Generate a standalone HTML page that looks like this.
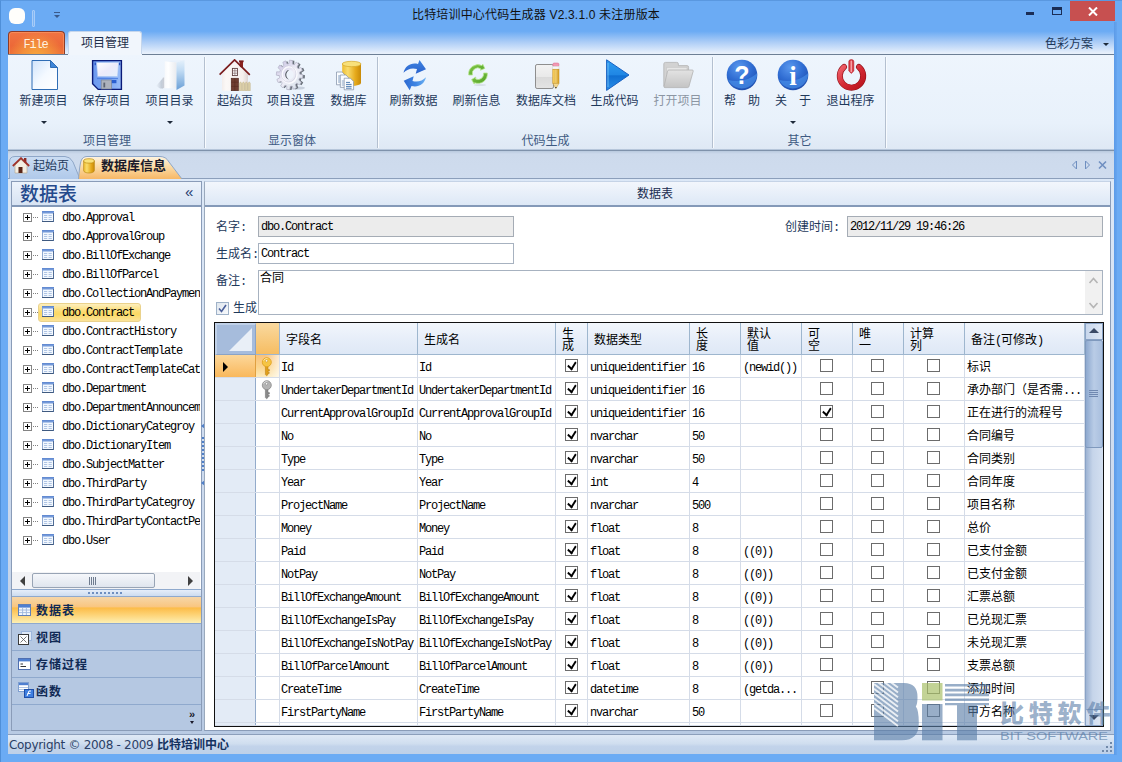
<!DOCTYPE html><html lang="zh"><head><meta charset="utf-8"><title>比特培训中心代码生成器</title><style>
*{box-sizing:border-box;margin:0;padding:0}
html,body{width:1122px;height:762px;overflow:hidden}
body{position:relative;background:#6babf4;font-family:"Liberation Sans","Noto Sans CJK SC",sans-serif;font-size:12px;color:#000}
.a{position:absolute}
.ui{font-family:"Liberation Sans","Noto Sans CJK SC",sans-serif;color:#1e395b}
.ss{font-family:"Liberation Mono","Noto Sans CJK SC",monospace;font-size:12px;letter-spacing:-1.2px;white-space:nowrap}
.ss b,.cj{letter-spacing:0;font-weight:normal;font-family:"Liberation Sans","Noto Sans CJK SC",sans-serif}
.rb{position:absolute;top:59px;height:74px;text-align:center;white-space:nowrap}
.rb svg{position:absolute;top:0;left:50%;margin-left:-16px}
.rb span{position:absolute;left:0;right:0;top:34px;line-height:16px;font-size:12px;color:#1e395b}
.rb i{position:absolute;left:50%;margin-left:-3px;top:62px;width:0;height:0;border:3px solid transparent;border-top:3px solid #1e2a3a;border-bottom:0}
.gl{position:absolute;top:133px;height:16px;line-height:16px;text-align:center;color:#3e5a82;font-size:12px}
.sep{position:absolute;top:57px;height:91px;width:2px;border-left:1px solid #b4c0d0;border-right:1px solid #f8fbfe}
.tr{position:absolute;left:12px;width:188px;height:19px;overflow:hidden}
.tr .pm{position:absolute;left:11px;top:5px;width:9px;height:9px;border:1px solid #848484;background:#fff}
.tr .pm:before{content:"";position:absolute;left:1px;top:3px;width:5px;height:1px;background:#000}
.tr .pm:after{content:"";position:absolute;left:3px;top:1px;width:1px;height:5px;background:#000}
.tr .dt{position:absolute;left:21px;top:9px;width:5px;height:1px;background-image:linear-gradient(90deg,#808080 1px,transparent 1px);background-size:2px 1px}
.tr svg{position:absolute;left:30px;top:3px}
.tr .tx{position:absolute;left:50px;top:2px;line-height:17px;height:19px}
.nb{position:absolute;left:12px;width:189px;height:27px;border-top:1px solid #8fa9cd;background:#b5c8e2}
.nb span{position:absolute;left:24px;top:2px;letter-spacing:1px;line-height:25px;font-weight:bold;color:#102a55;font-size:12px;font-family:"Liberation Sans","Noto Sans CJK SC",sans-serif}
.nb svg{position:absolute;left:6px;top:6px}
.lab{position:absolute;margin-top:1px;line-height:14px;color:#1e395b;font-size:12px;white-space:nowrap;font-family:"Liberation Sans","Noto Sans CJK SC",sans-serif}
.inp{position:absolute;height:21px;border:1px solid #a7b2c0;background:#fff;padding-left:2px;line-height:21px;overflow:hidden}
.inp.dis{background:#ececec;border-color:#a5acb5}
.gh{position:absolute;top:323px;height:32px;background:linear-gradient(#f2f6fc 0,#e7eef9 50%,#dee8f6 100%);border-right:1px solid #9eb6ce;border-bottom:1px solid #9eb6ce;color:#000;font-family:"Liberation Sans","Noto Sans CJK SC",sans-serif;font-size:12px;line-height:12px;white-space:nowrap;overflow:hidden}
.gh span{position:absolute;left:6px}
.gr{position:absolute;left:215px;width:870px;height:23px;border-bottom:1px solid #d5dce8;background:#fff}
.gr .rh{position:absolute;left:0;top:0;width:41px;height:23px;background:#e3ebf6;border-right:1px solid #93abcb;border-bottom:1px solid #93abcb}
.gr .c{position:absolute;top:0;height:22px;border-right:1px solid #d5dce8;line-height:27px;overflow:hidden;padding-left:1px}
.cb{position:absolute;top:4px;width:13px;height:13px;border:1px solid #6c6c6c;background:#fff}
.cb.on:after{content:"";position:absolute;left:3px;top:0px;width:3.5px;height:7px;border:solid #000;border-width:0 2.2px 2.2px 0;transform:rotate(42deg) skewX(10deg)}
</style></head><body>
<div class="a" style="left:0;top:0;width:1122px;height:762px;background:#6babf4;border-left:1px solid #4f8fd8;border-top:1px solid #5a98e0"></div>
<div class="a" style="left:1114px;top:22px;width:3px;height:733px;background:linear-gradient(90deg,#5c9be8,#66a5ef)"></div>
<div class="a" style="left:8px;top:28px;width:1106px;height:27px;background:linear-gradient(#6babf4 0,#6babf4 12%,#a9cbf6 50%,#e6effb 92%,#eaf1fb 100%)"></div>
<div class="a" style="left:9px;top:8px;width:16px;height:16px;border-radius:6px;background:#fffefb"></div>
<div class="a" style="left:32px;top:10px;width:3px;height:17px;border:1px solid #a8ccf8;border-radius:1px;background:#7fb6f5"></div>
<div class="a" style="left:54px;top:12px;width:6px;height:1px;background:#3a5a8a"></div>
<div class="a" style="left:54px;top:15px;width:0;height:0;border:3px solid transparent;border-top:3px solid #3a5a8a;border-bottom:0"></div>
<div class="a ui" style="left:0;top:6px;width:1072px;text-align:center;font-size:12px;line-height:18px;color:#111;white-space:nowrap;letter-spacing:.18px">比特培训中心代码生成器 V2.3.1.0 未注册版本</div>
<div class="a" style="left:1026px;top:12px;width:8px;height:3px;background:#1a2d55"></div>
<div class="a" style="left:1052px;top:7px;width:10px;height:8px;border:1px solid #1a2d55;border-top-width:3px"></div>
<div class="a" style="left:1070px;top:1px;width:45px;height:20px;background:#c75050"></div>
<svg class="a" style="left:1088px;top:7px" width="10" height="9" viewBox="0 0 10 9"><path d="M1 0.5 L9 8.5 M9 0.5 L1 8.5" stroke="#fff" stroke-width="2"/></svg>
<div class="a" style="left:8px;top:31px;width:57px;height:24px;border:1px solid #8c3b28;border-bottom:0;border-radius:4px 4px 0 0;background:radial-gradient(ellipse at 50% 105%,#f7a63c 0,rgba(247,166,60,.6) 35%,rgba(247,166,60,0) 70%),linear-gradient(#f07442 0,#ec6838 60%,#ee7038 100%);box-shadow:inset 0 0 0 1px rgba(255,170,120,.45)"></div>
<div class="a ss" style="left:7px;top:37px;width:57px;text-align:center;color:#fff3e0;line-height:16px">File</div>
<div class="a" style="left:68px;top:31px;width:74px;height:24px;border:1px solid #c5d6ec;border-bottom:0;border-radius:3px 3px 0 0;background:#f1f6fc"></div>
<div class="a ui" style="left:68px;top:34px;width:74px;text-align:center;line-height:18px;font-size:12px;color:#1e2f4a">项目管理</div>
<div class="a ui" style="left:1045px;top:35px;line-height:18px;font-size:12px;color:#1e395b;white-space:nowrap">色彩方案</div>
<div class="a" style="left:1103px;top:43px;width:0;height:0;border:3px solid transparent;border-top:3px solid #1e2a3a;border-bottom:0"></div>
<div class="a" style="left:8px;top:54px;width:1106px;height:97px;border-top:1px solid #6d7f95;border-bottom:1px solid #7f92ab;background:linear-gradient(#eef5fd 0,#e8f1fb 72%,#dee8f4 100%)"></div>
<div class="a" style="left:68px;top:54px;width:74px;height:1px;background:#f1f6fc"></div>
<div class="a" style="left:8px;top:149px;width:1106px;height:1px;background:#b6c6da"></div>
<svg width="0" height="0" style="position:absolute"><defs>
<linearGradient id="gDoc" x1="0" y1="0" x2="1" y2="1"><stop offset="0" stop-color="#cfe3fb"/><stop offset=".5" stop-color="#f4f9ff"/><stop offset="1" stop-color="#ffffff"/></linearGradient>
<linearGradient id="gFl" x1="0" y1="0" x2="1" y2="0"><stop offset="0" stop-color="#6b98ee"/><stop offset=".6" stop-color="#7ea8f4"/><stop offset="1" stop-color="#98bcf8"/></linearGradient>
<linearGradient id="gFlL" x1="0" y1="0" x2="1" y2="1"><stop offset="0" stop-color="#ffffff"/><stop offset=".5" stop-color="#ecebfa"/><stop offset="1" stop-color="#e4f0fd"/></linearGradient>
<linearGradient id="gFo" x1="0" y1="0" x2="0" y2="1"><stop offset="0" stop-color="#e6f1fb"/><stop offset=".35" stop-color="#c2dcf4"/><stop offset="1" stop-color="#6a9fd6"/></linearGradient>
<linearGradient id="gFoW" x1="0" y1="0" x2="1" y2="0"><stop offset="0" stop-color="#f4f6f9"/><stop offset=".4" stop-color="#ffffff"/><stop offset="1" stop-color="#e9ebef"/></linearGradient>
<linearGradient id="gWall" x1="0" y1="0" x2="1" y2="0"><stop offset="0" stop-color="#f3eeec"/><stop offset=".15" stop-color="#fbf8f6"/><stop offset=".8" stop-color="#f6f0ee"/><stop offset="1" stop-color="#ddd4d2"/></linearGradient>
<linearGradient id="gGear" x1="0" y1="0" x2="1" y2="1"><stop offset="0" stop-color="#c4bfe0"/><stop offset=".5" stop-color="#efeef7"/><stop offset="1" stop-color="#d3dfe6"/></linearGradient>
<linearGradient id="gCyl" x1="0" y1="0" x2="1" y2="0"><stop offset="0" stop-color="#eebc30"/><stop offset=".3" stop-color="#f9dc6c"/><stop offset=".7" stop-color="#e6aa1c"/><stop offset="1" stop-color="#c88a08"/></linearGradient>
<linearGradient id="gBl" x1="0" y1="0" x2="0" y2="1"><stop offset="0" stop-color="#3f84e2"/><stop offset="1" stop-color="#2a62cc"/></linearGradient>
<linearGradient id="gGr" x1="0" y1="0" x2="1" y2="1"><stop offset="0" stop-color="#86cc4c"/><stop offset="1" stop-color="#4c9c22"/></linearGradient>
<linearGradient id="gNote" x1="0" y1="0" x2="0" y2="1"><stop offset="0" stop-color="#f3f3f3"/><stop offset=".5" stop-color="#e9e9e9"/><stop offset=".52" stop-color="#dadada"/><stop offset="1" stop-color="#e4e4e4"/></linearGradient>
<linearGradient id="gPen" x1="0" y1="0" x2="1" y2="0"><stop offset="0" stop-color="#f6c44a"/><stop offset=".5" stop-color="#fbe08a"/><stop offset="1" stop-color="#d79a1c"/></linearGradient>
<linearGradient id="gPlay" x1="0" y1="0" x2="0" y2="1"><stop offset="0" stop-color="#2f9df0"/><stop offset=".5" stop-color="#1f86e4"/><stop offset=".52" stop-color="#0f6fd2"/><stop offset="1" stop-color="#2a8fe8"/></linearGradient>
<linearGradient id="gGf" x1="0" y1="0" x2="0" y2="1"><stop offset="0" stop-color="#e3e3e3"/><stop offset="1" stop-color="#c4c4c4"/></linearGradient>
<radialGradient id="gBall" cx=".4" cy=".25" r=".85"><stop offset="0" stop-color="#5a98ee"/><stop offset=".5" stop-color="#2f6cd2"/><stop offset="1" stop-color="#1c48a6"/></radialGradient>
<linearGradient id="gRed" x1="0" y1="0" x2="0" y2="1"><stop offset="0" stop-color="#e8454a"/><stop offset="1" stop-color="#a80f16"/></linearGradient>
<linearGradient id="gTi2" x1="0" y1="0" x2="0" y2="1"><stop offset="0" stop-color="#5a84cf"/><stop offset="1" stop-color="#86a8e0"/></linearGradient><linearGradient id="gTi" x1="0" y1="0" x2="0" y2="1"><stop offset="0" stop-color="#5f8fd8"/><stop offset=".3" stop-color="#5f8fd8"/><stop offset=".31" stop-color="#f4f8fd"/><stop offset="1" stop-color="#dbe6f4"/></linearGradient>
</defs></svg>
<div class="rb" style="left:12.5px;width:62px"><svg width="32" height="32" viewBox="0 0 32 32"><path d="M4 1.5 H22.5 L29.5 8.5 V30.5 H4 Z" fill="url(#gDoc)" stroke="#2f6db5" stroke-width="1"/><path d="M22.5 1.5 V8.5 H29.5 Z" fill="#3f86d8" stroke="#2f6db5" stroke-width="1" stroke-linejoin="round"/></svg><span style="color:#1e395b">新建项目</span><i></i></div>
<div class="rb" style="left:75.5px;width:62px"><svg width="32" height="32" viewBox="0 0 32 32"><path d="M1.6 1.6 H30.4 V30.4 H7.2 L1.6 24.8 Z" fill="url(#gFl)" stroke="#0a1a78" stroke-width="1.4" stroke-linejoin="miter"/><path d="M5.6 3.4 H27.6 L26.6 17.6 H6.6 Z" fill="url(#gFlL)" stroke="#a8c4f0" stroke-width=".6"/><rect x="3.6" y="3.6" width="1.3" height="2.6" fill="#2a50c0"/><rect x="28" y="3.6" width="1.3" height="2.6" fill="#2a50c0"/><path d="M6 19.6 H27" stroke="#4f80e0" stroke-width="1"/><rect x="10.2" y="21" width="10.4" height="9" fill="#aeb2bc" stroke="#7f8694" stroke-width=".7"/><rect x="12.4" y="23.6" width="1.8" height="4.8" fill="#5e6572"/><rect x="20.8" y="21" width="4.6" height="3.2" fill="#2a5fd0"/></svg><span style="color:#1e395b">保存项目</span></div>
<div class="rb" style="left:138.5px;width:62px"><svg width="32" height="32" viewBox="0 0 32 32"><defs><linearGradient id="gSh" x1="0" y1="0" x2="1" y2="0"><stop offset="0" stop-color="#9aa4b4" stop-opacity="0"/><stop offset="1" stop-color="#8e98a8" stop-opacity=".55"/></linearGradient></defs><path d="M2 27 L9 19 V29.4 L6 29.4Z" fill="url(#gSh)"/><path d="M10.7 2.2 L30.5 .7 L22.5 3.6Z" fill="#e8f1fb"/><path d="M10.7 2.2 L22.5 3.6 V29.2 L9.6 29.2 L8.8 28.4 V18.5 H10.7Z" fill="url(#gFoW)"/><path d="M8.8 18.5 V28.4 L9.6 29.2 L10.2 29.2 V18.5Z" fill="#c9cdd6"/><path d="M22.5 3.6 L30.5 .7 V26.5 L22.5 31Z" fill="url(#gFo)"/></svg><span style="color:#1e395b">项目目录</span><i></i></div>
<div class="rb" style="left:210px;width:50px"><svg width="32" height="32" viewBox="0 0 32 32"><rect x="20.6" y="2.4" width="3.4" height="6" fill="#8a2420"/><rect x="20" y="1.4" width="4.6" height="1.8" fill="#7a1c1c"/><path d="M3 15 L15.6 2.6 L29 15.4 V31.7 H3 Z" fill="url(#gWall)"/><path d="M.6 15.6 L15.6 .9 L30.8 15.8" fill="none" stroke="#7c1d1d" stroke-width="1.7" stroke-linejoin="miter"/><rect x="13.4" y="9.4" width="5" height="7.2" fill="#fff" stroke="#5e4040" stroke-width=".9"/><path d="M15.9 9.4 V16.6 M13.4 11.8 H18.4 M13.4 14.2 H18.4" stroke="#6e5050" stroke-width=".6"/><rect x="11.4" y="18.4" width="8.8" height="13.3" fill="#fff"/><rect x="12.2" y="19.2" width="7.3" height="12.5" fill="#6e3c30" stroke="#4a2218" stroke-width=".6"/><path d="M12.2 23.2H19.5M12.2 27.4H19.5M15.8 19.2V31.7" stroke="#55281e" stroke-width=".5"/><path d="M20.4 24.2 l1.1-1.4 l1.1 1.4 v7.5 h-2.2z M23.3 24.2 l1.1-1.4 l1.1 1.4 v7.5 h-2.2z M26.2 24.2 l1.1-1.4 l1.1 1.4 v7.5 h-2.2z M29.1 24.2 l1.1-1.4 l1.1 1.4 v7.5 h-2.2z" fill="#dccfa8" stroke="#b9a878" stroke-width=".4"/></svg><span style="color:#1e395b">起始页</span></div>
<div class="rb" style="left:260px;width:62px"><svg width="32" height="32" viewBox="0 0 32 32"><ellipse cx="22" cy="29" rx="8" ry="1.6" fill="#aab2c2" opacity=".55"/><g transform="translate(16.4 16.3) scale(.92 1) rotate(6)"><path d="M14.7 -1.7 L14.7 1.7 L11.2 1.9 L10.7 4.0 L13.6 5.9 L11.9 8.8 L8.8 7.3 L7.3 8.8 L8.8 11.9 L5.9 13.6 L4.0 10.7 L1.9 11.2 L1.7 14.7 L-1.7 14.7 L-1.9 11.2 L-4.0 10.7 L-5.9 13.6 L-8.8 11.9 L-7.3 8.8 L-8.8 7.3 L-11.9 8.8 L-13.6 5.9 L-10.7 4.0 L-11.2 1.9 L-14.7 1.7 L-14.7 -1.7 L-11.2 -1.9 L-10.7 -4.0 L-13.6 -5.9 L-11.9 -8.8 L-8.8 -7.3 L-7.3 -8.8 L-8.8 -11.9 L-5.9 -13.6 L-4.0 -10.7 L-1.9 -11.2 L-1.7 -14.7 L1.7 -14.7 L1.9 -11.2 L4.0 -10.7 L5.9 -13.6 L8.8 -11.9 L7.3 -8.8 L8.8 -7.3 L11.9 -8.8 L13.6 -5.9 L10.7 -4.0 L11.2 -1.9 Z M-0.0 0.0 a0.0 0.0 0 1 0 0.0 0 a0.0 0.0 0 1 0 -0.0 0 Z" fill="#6a717a"/></g><g transform="translate(14.6 16) scale(.9 1) rotate(6)"><path d="M14.7 -1.7 L14.7 1.7 L11.2 1.9 L10.7 4.0 L13.6 5.9 L11.9 8.8 L8.8 7.3 L7.3 8.8 L8.8 11.9 L5.9 13.6 L4.0 10.7 L1.9 11.2 L1.7 14.7 L-1.7 14.7 L-1.9 11.2 L-4.0 10.7 L-5.9 13.6 L-8.8 11.9 L-7.3 8.8 L-8.8 7.3 L-11.9 8.8 L-13.6 5.9 L-10.7 4.0 L-11.2 1.9 L-14.7 1.7 L-14.7 -1.7 L-11.2 -1.9 L-10.7 -4.0 L-13.6 -5.9 L-11.9 -8.8 L-8.8 -7.3 L-7.3 -8.8 L-8.8 -11.9 L-5.9 -13.6 L-4.0 -10.7 L-1.9 -11.2 L-1.7 -14.7 L1.7 -14.7 L1.9 -11.2 L4.0 -10.7 L5.9 -13.6 L8.8 -11.9 L7.3 -8.8 L8.8 -7.3 L11.9 -8.8 L13.6 -5.9 L10.7 -4.0 L11.2 -1.9 Z M-0.0 0.0 a0.0 0.0 0 1 0 0.0 0 a0.0 0.0 0 1 0 -0.0 0 Z" fill="url(#gGear)" stroke="#b3b1c6" stroke-width=".7"/></g><ellipse cx="14.4" cy="15.8" rx="7.4" ry="8.2" fill="none" stroke="#fcfcff" stroke-width="1.8" opacity=".9"/><ellipse cx="14.4" cy="15.8" rx="7.4" ry="8.2" fill="none" stroke="#c4c2d6" stroke-width=".5" transform="translate(-.9 -.9)"/><ellipse cx="14.6" cy="15.8" rx="4" ry="4.7" fill="#eef3fb"/><path d="M14.2 11.1 A4 4.7 0 0 0 14.2 20.5 A6.4 5.6 0 0 1 14.2 11.1Z" fill="#4e545c"/></svg><span style="color:#1e395b">项目设置</span></div>
<div class="rb" style="left:323.5px;width:50px"><svg width="32" height="32" viewBox="0 0 32 32"><path d="M9.2 5 V24 A9.4 3 0 0 0 28 24 V5 Z" fill="url(#gCyl)"/><ellipse cx="18.6" cy="5" rx="9.4" ry="2.7" fill="#f8e07a" stroke="#d4a62a" stroke-width=".7"/><g stroke="#7c8ca3" stroke-width=".7" fill="#fbfdff"><path d="M3.5 13 h5.6 l2.4 2.4 v10.4 h-8z"/><path d="M7.3 16 h5.6 l2.6 2.6 v9.8 h-8.2z"/><path d="M11.2 19.2 h6.2 l3.2 3.2 v8.4 h-9.4z"/></g><path d="M13 23.4h4M13 25.4h5.6M13 27.4h5.6M13 29.2h5.6" stroke="#3f6fa8" stroke-width=".9"/><path d="M5 17h2M5 19h2M5 21h2M5 23h2M8.8 22h2M8.8 24h2M8.8 26h2" stroke="#6f8fb8" stroke-width=".8"/></svg><span style="color:#1e395b">数据库</span></div>
<div class="rb" style="left:382.5px;width:62px"><svg width="32" height="32" viewBox="0 0 32 32"><defs><linearGradient id="gBl2" x1="0" y1="0" x2="1" y2="0"><stop offset="0" stop-color="#2c68d0"/><stop offset=".55" stop-color="#3f86e4"/><stop offset="1" stop-color="#6db2f2"/></linearGradient></defs><path d="M5.5 13.8 C7 7 13 3.2 20 5 L21.5 1 L28 10.2 L17.7 14.7 L19 10 C14 8.5 9 10 5.5 13.8 Z" fill="url(#gBl)"/><path d="M28 18.2 C26.5 25 20.5 28.8 13.5 27 L11.7 31.2 L5.7 21.7 L15.7 17.2 L14.5 22 C19.5 23.5 24.5 22 28 18.2 Z" fill="url(#gBl2)"/></svg><span style="color:#1e395b">刷新数据</span></div>
<div class="rb" style="left:445.5px;width:62px"><svg width="32" height="32" viewBox="0 0 32 32"><ellipse cx="19" cy="26" rx="6" ry="1" fill="#c5ccd8" opacity=".5"/><g stroke="#b6e68e" stroke-width=".8" stroke-linejoin="round"><path d="M7.7 16 A9.3 9.3 0 0 1 21 6.6 L21.8 5.2 L23.8 9.4 L19.4 11.2 L19.9 9.9 A5.5 5.5 0 0 0 11.5 16 Z" fill="url(#gGr)"/><path d="M26.3 14 A9.3 9.3 0 0 1 13.6 23.7 L13.2 25 L10.6 20.6 L14.8 18 L14.6 19.9 A5.5 5.5 0 0 0 22.5 14 Z" fill="url(#gGr)"/></g></svg><span style="color:#1e395b">刷新信息</span></div>
<div class="rb" style="left:509px;width:74px"><svg width="32" height="32" viewBox="0 0 32 32"><rect x="5.5" y="5.5" width="18" height="24" rx="1.6" fill="url(#gNote)" stroke="#8e8e8e" stroke-width="1"/><rect x="22.8" y="4" width="6.2" height="3.4" rx="1.4" fill="#f29ab4" stroke="#d86a8c" stroke-width=".5"/><rect x="22.8" y="7.2" width="6.2" height="3" fill="#f7f7f7" stroke="#c9c9c9" stroke-width=".4"/><rect x="22.8" y="10.2" width="6.2" height="14.2" fill="url(#gPen)" stroke="#c08a18" stroke-width=".5"/><path d="M25 10.2V24.4M27 10.2V24.4" stroke="#c48c1a" stroke-width=".5"/><path d="M22.8 24.4 L25.9 29.6 L29 24.4 Z" fill="#f3d790" stroke="#c08a18" stroke-width=".4"/><path d="M25 28 L25.9 29.6 L26.8 28 Z" fill="#2a2a2a"/></svg><span style="color:#1e395b">数据库文档</span></div>
<div class="rb" style="left:583.5px;width:62px"><svg width="32" height="32" viewBox="0 0 32 32"><path d="M7.6 .8 L30 16 L7.6 31.4 Z" fill="url(#gPlay)" stroke="#1a62c2" stroke-width="1" stroke-linejoin="round"/><path d="M9 4 L9 28" stroke="#8ad0fc" stroke-width="1" opacity=".7"/></svg><span style="color:#1e395b">生成代码</span></div>
<div class="rb" style="left:646.5px;width:62px"><svg width="32" height="32" viewBox="0 0 32 32"><path d="M1.8 5 a1.6 1.6 0 0 1 1.6 -1.6 h11.4 a1.6 1.6 0 0 1 1.6 1.6 v1.6 h8.6 a1.6 1.6 0 0 1 1.6 1.6 v19 h-24.8z" fill="#d2d2d2" stroke="#b4b4b4" stroke-width=".8"/><path d="M4.6 8.4 h20.4 v6 h-20.4z" fill="#e6e6e6" stroke="#bdbdbd" stroke-width=".5"/><path d="M6.8 11 H30.2 a1 1 0 0 1 1 1.2 L26.9 27.6 a1.4 1.4 0 0 1 -1.3 1 H3 a1 1 0 0 1 -1 -1.2 L5.6 12 a1.4 1.4 0 0 1 1.2 -1z" fill="url(#gGf)" stroke="#b2b2b2" stroke-width=".8"/></svg><span style="color:#8c96a3">打开项目</span></div>
<div class="rb" style="left:717px;width:50px"><svg width="32" height="32" viewBox="0 0 32 32"><circle cx="16" cy="16" r="15.3" fill="url(#gBall)"/><path d="M2.2 21 A15.3 15.3 0 0 0 31.2 14 A26 20 0 0 1 2.2 21Z" fill="#4d96ee" opacity=".6"/><text x="16" y="24.5" text-anchor="middle" font-family="Liberation Sans,sans-serif" font-weight="bold" font-size="25" fill="#fff">?</text></svg><span style="color:#1e395b">帮<em style="display:inline-block;width:12px"></em>助</span></div>
<div class="rb" style="left:768px;width:50px"><svg width="32" height="32" viewBox="0 0 32 32"><circle cx="16" cy="16" r="15.3" fill="url(#gBall)"/><path d="M2.2 21 A15.3 15.3 0 0 0 31.2 14 A26 20 0 0 1 2.2 21Z" fill="#4d96ee" opacity=".6"/><text x="16" y="25.5" text-anchor="middle" font-family="Liberation Serif,serif" font-weight="bold" font-size="27" fill="#fff">i</text></svg><span style="color:#1e395b">关<em style="display:inline-block;width:12px"></em>于</span><i></i></div>
<div class="rb" style="left:819.5px;width:62px"><svg width="32" height="32" viewBox="0 0 32 32"><defs><linearGradient id="gRed2" x1="0" y1="0" x2="1" y2="1"><stop offset="0" stop-color="#f0606a"/><stop offset=".5" stop-color="#d42a34"/><stop offset="1" stop-color="#b8121c"/></linearGradient></defs><path d="M9 8 A11.7 11.7 0 1 0 24 8" fill="none" stroke="#8e0c14" stroke-width="6" stroke-linecap="round"/><path d="M9 8 A11.7 11.7 0 1 0 24 8" fill="none" stroke="url(#gRed2)" stroke-width="4.8" stroke-linecap="round"/><path d="M13.8 2.6 a2.5 2 0 0 1 5 0 V12 L16.3 14.4 L13.8 12Z" fill="#d83a44" stroke="#b01a24" stroke-width=".6"/><path d="M16.3 2.4 V12.4" stroke="#f7a0a6" stroke-width="1.6" stroke-linecap="round"/></svg><span style="color:#1e395b">退出程序</span></div>
<div class="sep" style="left:204px"></div>
<div class="sep" style="left:377px"></div>
<div class="sep" style="left:712px"></div>
<div class="sep" style="left:885px"></div>
<div class="gl ui" style="left:10px;width:194px">项目管理</div>
<div class="gl ui" style="left:206px;width:172px">显示窗体</div>
<div class="gl ui" style="left:379px;width:333px">代码生成</div>
<div class="gl ui" style="left:714px;width:171px">其它</div>
<div class="a" style="left:8px;top:151px;width:1106px;height:28px;background:linear-gradient(#b9c9de 0,#cddaec 3px,#cfdcee 100%)"></div>
<div class="a" style="left:8px;top:178px;width:1106px;height:557px;background:linear-gradient(#dce8f7 0,#cfdcef 50%,#b8cae3 100%);border-top:1px solid #8c9fbb;border-bottom:1px solid #8c9fbb"></div>
<svg class="a" style="left:9px;top:156px" width="72" height="23" viewBox="0 0 72 23"><defs><linearGradient id="t1" x1="0" y1="0" x2="0" y2="1"><stop offset="0" stop-color="#cbddf3"/><stop offset="1" stop-color="#b0c9ea"/></linearGradient></defs><path d="M.5 23 V6 Q.5 .5 6 .5 H56 Q61 .5 64 6 L71 23" fill="url(#t1)" stroke="#8fa7c8" stroke-width="1"/></svg>
<svg class="a" style="left:12px;top:157px" width="18" height="17" viewBox="0 0 18 17"><rect x="12" y="1" width="2.4" height="5" fill="#8c2a22"/><path d="M3 8 L9 2.5 L15 8 V16 H3Z" fill="#f4eee2" stroke="#b5a68c" stroke-width=".6"/><path d="M.8 9 L9 1.2 L17.2 9" fill="none" stroke="#a03028" stroke-width="1.8"/><rect x="6.5" y="10" width="4" height="6" fill="#5a2618"/></svg>
<div class="a cj" style="left:33px;top:158px;line-height:16px;font-size:12px;color:#1e395b">起始页</div>
<svg class="a" style="left:78px;top:156px" width="108" height="23" viewBox="0 0 108 23"><defs><linearGradient id="t2" x1="0" y1="0" x2="0" y2="1"><stop offset="0" stop-color="#fdf3e2"/><stop offset=".45" stop-color="#fbdba6"/><stop offset="1" stop-color="#f7b867"/></linearGradient></defs><path d="M.5 23 Q1.5 10 3 5 Q4.5 .5 9 .5 H82 Q88 .5 91 6 L104 23" fill="url(#t2)" stroke="#8fa7c8" stroke-width="1"/></svg>
<svg class="a" style="left:83px;top:158px" width="12" height="16" viewBox="0 0 13 17"><path d="M.7 3 V13.5 A5.8 2.6 0 0 0 12.3 13.5 V3Z" fill="url(#gCyl)" stroke="#b8860b" stroke-width=".7"/><ellipse cx="6.5" cy="3" rx="5.8" ry="2.4" fill="#fae27a" stroke="#b8860b" stroke-width=".7"/></svg>
<div class="a" style="left:101px;top:157px;line-height:18px;font-size:13px;font-weight:bold;color:#1a1a2a;white-space:nowrap;font-family:'Liberation Sans','Noto Sans CJK SC',sans-serif">数据库信息</div>
<svg class="a" style="left:1070px;top:160px" width="40" height="10" viewBox="0 0 40 10"><path d="M6.5 1 L2.5 5 L6.5 9Z" fill="none" stroke="#6f8fc0" stroke-width="1"/><path d="M15.5 1 L19.5 5 L15.5 9Z" fill="none" stroke="#6f8fc0" stroke-width="1"/><path d="M29 1.5 L36 8.5 M36 1.5 L29 8.5" stroke="#6f8fc0" stroke-width="1.6"/></svg>
<div class="a" style="left:11px;top:181px;width:191px;height:550px;border:1px solid #8a9cb8;background:#fff"></div>
<div class="a" style="left:12px;top:182px;width:189px;height:25px;background:linear-gradient(#edf3fb,#d7e3f3);border-bottom:2px solid #8499b8"></div>
<div class="a" style="left:20px;top:182px;line-height:26px;font-size:19px;font-weight:500;color:#254a8c;letter-spacing:0;font-family:'Liberation Sans','Noto Sans CJK SC',sans-serif">数据表</div>
<div class="a" style="left:185px;top:183px;line-height:18px;font-size:15px;color:#1e3a6e;font-family:'Liberation Sans',sans-serif">«</div>
<div class="tr" style="top:208px">
<div class="pm"></div><div class="dt"></div><svg width="12" height="11" viewBox="0 0 12 11"><rect x="0" y="0" width="12" height="11" fill="#5d7ba8"/><rect x="1" y="0" width="10" height="10" fill="#f3f8fe"/><rect x="0" y="0" width="1" height="11" fill="#8fa9d0"/><rect x="0" y="0" width="12" height="2.6" fill="url(#gTi2)"/><path d="M2 4.5h3.2M6.6 4.5h3.2M2 6.5h3.2M6.6 6.5h3.2M2 8.5h3.2M6.6 8.5h3.2" stroke="#aec4e4" stroke-width="1"/><rect x="0" y="10" width="12" height="1" fill="#3f5a80"/><rect x="11" y="2" width="1" height="9" fill="#4f6c96"/></svg><div class="tx ss">dbo.Approval</div></div>
<div class="tr" style="top:227px">
<div class="pm"></div><div class="dt"></div><svg width="12" height="11" viewBox="0 0 12 11"><rect x="0" y="0" width="12" height="11" fill="#5d7ba8"/><rect x="1" y="0" width="10" height="10" fill="#f3f8fe"/><rect x="0" y="0" width="1" height="11" fill="#8fa9d0"/><rect x="0" y="0" width="12" height="2.6" fill="url(#gTi2)"/><path d="M2 4.5h3.2M6.6 4.5h3.2M2 6.5h3.2M6.6 6.5h3.2M2 8.5h3.2M6.6 8.5h3.2" stroke="#aec4e4" stroke-width="1"/><rect x="0" y="10" width="12" height="1" fill="#3f5a80"/><rect x="11" y="2" width="1" height="9" fill="#4f6c96"/></svg><div class="tx ss">dbo.ApprovalGroup</div></div>
<div class="tr" style="top:246px">
<div class="pm"></div><div class="dt"></div><svg width="12" height="11" viewBox="0 0 12 11"><rect x="0" y="0" width="12" height="11" fill="#5d7ba8"/><rect x="1" y="0" width="10" height="10" fill="#f3f8fe"/><rect x="0" y="0" width="1" height="11" fill="#8fa9d0"/><rect x="0" y="0" width="12" height="2.6" fill="url(#gTi2)"/><path d="M2 4.5h3.2M6.6 4.5h3.2M2 6.5h3.2M6.6 6.5h3.2M2 8.5h3.2M6.6 8.5h3.2" stroke="#aec4e4" stroke-width="1"/><rect x="0" y="10" width="12" height="1" fill="#3f5a80"/><rect x="11" y="2" width="1" height="9" fill="#4f6c96"/></svg><div class="tx ss">dbo.BillOfExchange</div></div>
<div class="tr" style="top:265px">
<div class="pm"></div><div class="dt"></div><svg width="12" height="11" viewBox="0 0 12 11"><rect x="0" y="0" width="12" height="11" fill="#5d7ba8"/><rect x="1" y="0" width="10" height="10" fill="#f3f8fe"/><rect x="0" y="0" width="1" height="11" fill="#8fa9d0"/><rect x="0" y="0" width="12" height="2.6" fill="url(#gTi2)"/><path d="M2 4.5h3.2M6.6 4.5h3.2M2 6.5h3.2M6.6 6.5h3.2M2 8.5h3.2M6.6 8.5h3.2" stroke="#aec4e4" stroke-width="1"/><rect x="0" y="10" width="12" height="1" fill="#3f5a80"/><rect x="11" y="2" width="1" height="9" fill="#4f6c96"/></svg><div class="tx ss">dbo.BillOfParcel</div></div>
<div class="tr" style="top:284px">
<div class="pm"></div><div class="dt"></div><svg width="12" height="11" viewBox="0 0 12 11"><rect x="0" y="0" width="12" height="11" fill="#5d7ba8"/><rect x="1" y="0" width="10" height="10" fill="#f3f8fe"/><rect x="0" y="0" width="1" height="11" fill="#8fa9d0"/><rect x="0" y="0" width="12" height="2.6" fill="url(#gTi2)"/><path d="M2 4.5h3.2M6.6 4.5h3.2M2 6.5h3.2M6.6 6.5h3.2M2 8.5h3.2M6.6 8.5h3.2" stroke="#aec4e4" stroke-width="1"/><rect x="0" y="10" width="12" height="1" fill="#3f5a80"/><rect x="11" y="2" width="1" height="9" fill="#4f6c96"/></svg><div class="tx ss">dbo.CollectionAndPaymentPlan</div></div>
<div class="tr" style="top:303px">
<div class="a" style="left:26px;top:0;width:103px;height:19px;border:1px solid #ead28c;border-radius:3px;background:linear-gradient(#fdefbd 0,#fcdc70 45%,#fcd964 60%,#fbe39a 100%)"></div>
<div class="pm"></div><div class="dt"></div><svg width="12" height="11" viewBox="0 0 12 11"><rect x="0" y="0" width="12" height="11" fill="#5d7ba8"/><rect x="1" y="0" width="10" height="10" fill="#f3f8fe"/><rect x="0" y="0" width="1" height="11" fill="#8fa9d0"/><rect x="0" y="0" width="12" height="2.6" fill="url(#gTi2)"/><path d="M2 4.5h3.2M6.6 4.5h3.2M2 6.5h3.2M6.6 6.5h3.2M2 8.5h3.2M6.6 8.5h3.2" stroke="#aec4e4" stroke-width="1"/><rect x="0" y="10" width="12" height="1" fill="#3f5a80"/><rect x="11" y="2" width="1" height="9" fill="#4f6c96"/></svg><div class="tx ss">dbo.Contract</div></div>
<div class="tr" style="top:322px">
<div class="pm"></div><div class="dt"></div><svg width="12" height="11" viewBox="0 0 12 11"><rect x="0" y="0" width="12" height="11" fill="#5d7ba8"/><rect x="1" y="0" width="10" height="10" fill="#f3f8fe"/><rect x="0" y="0" width="1" height="11" fill="#8fa9d0"/><rect x="0" y="0" width="12" height="2.6" fill="url(#gTi2)"/><path d="M2 4.5h3.2M6.6 4.5h3.2M2 6.5h3.2M6.6 6.5h3.2M2 8.5h3.2M6.6 8.5h3.2" stroke="#aec4e4" stroke-width="1"/><rect x="0" y="10" width="12" height="1" fill="#3f5a80"/><rect x="11" y="2" width="1" height="9" fill="#4f6c96"/></svg><div class="tx ss">dbo.ContractHistory</div></div>
<div class="tr" style="top:341px">
<div class="pm"></div><div class="dt"></div><svg width="12" height="11" viewBox="0 0 12 11"><rect x="0" y="0" width="12" height="11" fill="#5d7ba8"/><rect x="1" y="0" width="10" height="10" fill="#f3f8fe"/><rect x="0" y="0" width="1" height="11" fill="#8fa9d0"/><rect x="0" y="0" width="12" height="2.6" fill="url(#gTi2)"/><path d="M2 4.5h3.2M6.6 4.5h3.2M2 6.5h3.2M6.6 6.5h3.2M2 8.5h3.2M6.6 8.5h3.2" stroke="#aec4e4" stroke-width="1"/><rect x="0" y="10" width="12" height="1" fill="#3f5a80"/><rect x="11" y="2" width="1" height="9" fill="#4f6c96"/></svg><div class="tx ss">dbo.ContractTemplate</div></div>
<div class="tr" style="top:360px">
<div class="pm"></div><div class="dt"></div><svg width="12" height="11" viewBox="0 0 12 11"><rect x="0" y="0" width="12" height="11" fill="#5d7ba8"/><rect x="1" y="0" width="10" height="10" fill="#f3f8fe"/><rect x="0" y="0" width="1" height="11" fill="#8fa9d0"/><rect x="0" y="0" width="12" height="2.6" fill="url(#gTi2)"/><path d="M2 4.5h3.2M6.6 4.5h3.2M2 6.5h3.2M6.6 6.5h3.2M2 8.5h3.2M6.6 8.5h3.2" stroke="#aec4e4" stroke-width="1"/><rect x="0" y="10" width="12" height="1" fill="#3f5a80"/><rect x="11" y="2" width="1" height="9" fill="#4f6c96"/></svg><div class="tx ss">dbo.ContractTemplateCategory</div></div>
<div class="tr" style="top:379px">
<div class="pm"></div><div class="dt"></div><svg width="12" height="11" viewBox="0 0 12 11"><rect x="0" y="0" width="12" height="11" fill="#5d7ba8"/><rect x="1" y="0" width="10" height="10" fill="#f3f8fe"/><rect x="0" y="0" width="1" height="11" fill="#8fa9d0"/><rect x="0" y="0" width="12" height="2.6" fill="url(#gTi2)"/><path d="M2 4.5h3.2M6.6 4.5h3.2M2 6.5h3.2M6.6 6.5h3.2M2 8.5h3.2M6.6 8.5h3.2" stroke="#aec4e4" stroke-width="1"/><rect x="0" y="10" width="12" height="1" fill="#3f5a80"/><rect x="11" y="2" width="1" height="9" fill="#4f6c96"/></svg><div class="tx ss">dbo.Department</div></div>
<div class="tr" style="top:398px">
<div class="pm"></div><div class="dt"></div><svg width="12" height="11" viewBox="0 0 12 11"><rect x="0" y="0" width="12" height="11" fill="#5d7ba8"/><rect x="1" y="0" width="10" height="10" fill="#f3f8fe"/><rect x="0" y="0" width="1" height="11" fill="#8fa9d0"/><rect x="0" y="0" width="12" height="2.6" fill="url(#gTi2)"/><path d="M2 4.5h3.2M6.6 4.5h3.2M2 6.5h3.2M6.6 6.5h3.2M2 8.5h3.2M6.6 8.5h3.2" stroke="#aec4e4" stroke-width="1"/><rect x="0" y="10" width="12" height="1" fill="#3f5a80"/><rect x="11" y="2" width="1" height="9" fill="#4f6c96"/></svg><div class="tx ss">dbo.DepartmentAnnouncement</div></div>
<div class="tr" style="top:417px">
<div class="pm"></div><div class="dt"></div><svg width="12" height="11" viewBox="0 0 12 11"><rect x="0" y="0" width="12" height="11" fill="#5d7ba8"/><rect x="1" y="0" width="10" height="10" fill="#f3f8fe"/><rect x="0" y="0" width="1" height="11" fill="#8fa9d0"/><rect x="0" y="0" width="12" height="2.6" fill="url(#gTi2)"/><path d="M2 4.5h3.2M6.6 4.5h3.2M2 6.5h3.2M6.6 6.5h3.2M2 8.5h3.2M6.6 8.5h3.2" stroke="#aec4e4" stroke-width="1"/><rect x="0" y="10" width="12" height="1" fill="#3f5a80"/><rect x="11" y="2" width="1" height="9" fill="#4f6c96"/></svg><div class="tx ss">dbo.DictionaryCategroy</div></div>
<div class="tr" style="top:436px">
<div class="pm"></div><div class="dt"></div><svg width="12" height="11" viewBox="0 0 12 11"><rect x="0" y="0" width="12" height="11" fill="#5d7ba8"/><rect x="1" y="0" width="10" height="10" fill="#f3f8fe"/><rect x="0" y="0" width="1" height="11" fill="#8fa9d0"/><rect x="0" y="0" width="12" height="2.6" fill="url(#gTi2)"/><path d="M2 4.5h3.2M6.6 4.5h3.2M2 6.5h3.2M6.6 6.5h3.2M2 8.5h3.2M6.6 8.5h3.2" stroke="#aec4e4" stroke-width="1"/><rect x="0" y="10" width="12" height="1" fill="#3f5a80"/><rect x="11" y="2" width="1" height="9" fill="#4f6c96"/></svg><div class="tx ss">dbo.DictionaryItem</div></div>
<div class="tr" style="top:455px">
<div class="pm"></div><div class="dt"></div><svg width="12" height="11" viewBox="0 0 12 11"><rect x="0" y="0" width="12" height="11" fill="#5d7ba8"/><rect x="1" y="0" width="10" height="10" fill="#f3f8fe"/><rect x="0" y="0" width="1" height="11" fill="#8fa9d0"/><rect x="0" y="0" width="12" height="2.6" fill="url(#gTi2)"/><path d="M2 4.5h3.2M6.6 4.5h3.2M2 6.5h3.2M6.6 6.5h3.2M2 8.5h3.2M6.6 8.5h3.2" stroke="#aec4e4" stroke-width="1"/><rect x="0" y="10" width="12" height="1" fill="#3f5a80"/><rect x="11" y="2" width="1" height="9" fill="#4f6c96"/></svg><div class="tx ss">dbo.SubjectMatter</div></div>
<div class="tr" style="top:474px">
<div class="pm"></div><div class="dt"></div><svg width="12" height="11" viewBox="0 0 12 11"><rect x="0" y="0" width="12" height="11" fill="#5d7ba8"/><rect x="1" y="0" width="10" height="10" fill="#f3f8fe"/><rect x="0" y="0" width="1" height="11" fill="#8fa9d0"/><rect x="0" y="0" width="12" height="2.6" fill="url(#gTi2)"/><path d="M2 4.5h3.2M6.6 4.5h3.2M2 6.5h3.2M6.6 6.5h3.2M2 8.5h3.2M6.6 8.5h3.2" stroke="#aec4e4" stroke-width="1"/><rect x="0" y="10" width="12" height="1" fill="#3f5a80"/><rect x="11" y="2" width="1" height="9" fill="#4f6c96"/></svg><div class="tx ss">dbo.ThirdParty</div></div>
<div class="tr" style="top:493px">
<div class="pm"></div><div class="dt"></div><svg width="12" height="11" viewBox="0 0 12 11"><rect x="0" y="0" width="12" height="11" fill="#5d7ba8"/><rect x="1" y="0" width="10" height="10" fill="#f3f8fe"/><rect x="0" y="0" width="1" height="11" fill="#8fa9d0"/><rect x="0" y="0" width="12" height="2.6" fill="url(#gTi2)"/><path d="M2 4.5h3.2M6.6 4.5h3.2M2 6.5h3.2M6.6 6.5h3.2M2 8.5h3.2M6.6 8.5h3.2" stroke="#aec4e4" stroke-width="1"/><rect x="0" y="10" width="12" height="1" fill="#3f5a80"/><rect x="11" y="2" width="1" height="9" fill="#4f6c96"/></svg><div class="tx ss">dbo.ThirdPartyCategroy</div></div>
<div class="tr" style="top:512px">
<div class="pm"></div><div class="dt"></div><svg width="12" height="11" viewBox="0 0 12 11"><rect x="0" y="0" width="12" height="11" fill="#5d7ba8"/><rect x="1" y="0" width="10" height="10" fill="#f3f8fe"/><rect x="0" y="0" width="1" height="11" fill="#8fa9d0"/><rect x="0" y="0" width="12" height="2.6" fill="url(#gTi2)"/><path d="M2 4.5h3.2M6.6 4.5h3.2M2 6.5h3.2M6.6 6.5h3.2M2 8.5h3.2M6.6 8.5h3.2" stroke="#aec4e4" stroke-width="1"/><rect x="0" y="10" width="12" height="1" fill="#3f5a80"/><rect x="11" y="2" width="1" height="9" fill="#4f6c96"/></svg><div class="tx ss">dbo.ThirdPartyContactPerson</div></div>
<div class="tr" style="top:531px">
<div class="pm"></div><div class="dt"></div><svg width="12" height="11" viewBox="0 0 12 11"><rect x="0" y="0" width="12" height="11" fill="#5d7ba8"/><rect x="1" y="0" width="10" height="10" fill="#f3f8fe"/><rect x="0" y="0" width="1" height="11" fill="#8fa9d0"/><rect x="0" y="0" width="12" height="2.6" fill="url(#gTi2)"/><path d="M2 4.5h3.2M6.6 4.5h3.2M2 6.5h3.2M6.6 6.5h3.2M2 8.5h3.2M6.6 8.5h3.2" stroke="#aec4e4" stroke-width="1"/><rect x="0" y="10" width="12" height="1" fill="#3f5a80"/><rect x="11" y="2" width="1" height="9" fill="#4f6c96"/></svg><div class="tx ss">dbo.User</div></div>
<div class="a" style="left:12px;top:572px;width:188px;height:17px;background:#f2f3f6"></div>
<div class="a" style="left:32px;top:573px;width:123px;height:15px;border:1px solid #98a4b5;border-radius:2px;background:linear-gradient(#f5f7fb,#dfe5ee)"></div>
<div class="a" style="left:89px;top:577px;width:8px;height:8px;background-image:linear-gradient(90deg,#6f7c8f 1px,transparent 1px);background-size:2px 8px"></div>
<div class="a" style="left:20px;top:576px;width:0;height:0;border:5px solid transparent;border-right:5px solid #404040;border-left:0"></div>
<div class="a" style="left:188px;top:576px;width:0;height:0;border:5px solid transparent;border-left:5px solid #404040;border-right:0"></div>
<div class="a" style="left:12px;top:589px;width:189px;height:8px;background:linear-gradient(#e6eef9,#c9d9ee);border-top:1px solid #8fa9cd"></div>
<div class="a" style="left:88px;top:592px;width:35px;height:2px;background-image:linear-gradient(90deg,#6f8fc0 2px,transparent 2px);background-size:4px 2px"></div>
<div class="nb" style="top:596px;background:linear-gradient(#f6d6a8 0,#f9c680 38%,#fcbc48 42%,#fdd070 65%,#fdefb2 100%)"><svg style="top:7px" width="13" height="12" viewBox="0 0 13 12"><rect x=".5" y=".5" width="12" height="11" fill="#f4f8fd" stroke="#5f7fb8"/><rect x="1" y="1" width="11" height="2.6" fill="#4f7fd0"/><path d="M1 6 H12 M1 8.6 H12 M4.6 3.6 V11 M8.4 3.6 V11" stroke="#9db7dd" stroke-width=".9"/></svg><span>数据表</span></div>
<div class="nb" style="top:623px"><svg style="top:7px" width="14" height="14" viewBox="0 0 14 14"><rect x="3.5" y=".5" width="10" height="9" fill="#dfe9f7" stroke="#9db7dd"/><rect x=".5" y="3.5" width="10" height="10" fill="#fff" stroke="#3a3a3a"/><path d="M2.5 5.5 L8.5 11.5 M8.5 5.5 L2.5 11.5" stroke="#555" stroke-width=".8"/></svg><span>视图</span></div>
<div class="nb" style="top:650px"><svg style="top:7px" width="13" height="12" viewBox="0 0 13 12"><rect x=".5" y=".5" width="12" height="11" fill="#fff" stroke="#4f6fb0"/><rect x="1" y="1" width="11" height="2.4" fill="#4f7fd0"/><path d="M2.5 6 H5 M2.5 8.5 H8" stroke="#333" stroke-width="1"/></svg><span>存储过程</span></div>
<div class="nb" style="top:677px"><svg style="top:4px" width="16" height="16" viewBox="0 0 16 16"><rect x=".5" y=".5" width="10" height="9" fill="#fff" stroke="#7f9fd0"/><rect x="1" y="1" width="9" height="2.2" fill="#4f7fd0"/><path d="M1 5.5H10M1 7.5H10" stroke="#9db7dd" stroke-width=".8"/><rect x="6.5" y="7.5" width="9" height="8" fill="#3f7fe0" stroke="#1f4fa8"/><path d="M9 14 L11 9 H13 M9.5 11.5 H12.5" stroke="#fff" stroke-width="1" fill="none"/></svg><span>函数</span></div>
<div class="nb" style="top:704px;height:26px"></div>
<div class="a" style="left:189px;top:707px;font-size:11px;line-height:14px;font-weight:bold;color:#1a1a2a;font-family:'Liberation Sans',sans-serif">»</div>
<div class="a" style="left:190px;top:721px;width:0;height:0;border:2.5px solid transparent;border-top:3px solid #1a1a2a;border-bottom:0"></div>
<div class="a" style="left:202px;top:437px;width:2px;height:36px;background-image:linear-gradient(#4f7fc8 2px,transparent 2px);background-size:2px 4px"></div>
<div class="a" style="left:201px;top:423px;width:0;height:0;border:3px solid transparent;border-right:4px solid #4f7fc8;border-left:0"></div>
<div class="a" style="left:201px;top:480px;width:0;height:0;border:3px solid transparent;border-right:4px solid #4f7fc8;border-left:0"></div>
<div class="a" style="left:204px;top:181px;width:907px;height:550px;border:1px solid #8a9cb8;border-top-color:#c5d3e6;border-left:1px solid #9aa9bc;background:#fff"></div>
<div class="a" style="left:205px;top:182px;width:905px;height:25px;background:linear-gradient(#f2f6fc,#dde8f6);border-bottom:2px solid #8499b8"></div>
<div class="a cj" style="left:203px;top:186px;width:904px;text-align:center;line-height:16px;font-size:12px;color:#1a2c50">数据表</div>
<div class="lab" style="left:216px;top:219px">名字<span class="ss">:</span></div>
<div class="inp dis ss" style="left:258px;top:216px;width:256px">dbo.Contract</div>
<div class="lab" style="left:785px;top:219px">创建时间<span class="ss">:</span></div>
<div class="inp dis ss" style="left:847px;top:216px;width:256px">2012/11/29 19:46:26</div>
<div class="lab" style="left:216px;top:246px">生成名<span class="ss">:</span></div>
<div class="inp ss" style="left:258px;top:243px;width:256px">Contract</div>
<div class="lab" style="left:216px;top:273px">备注<span class="ss">:</span></div>
<div class="inp" style="left:258px;top:270px;width:845px;height:45px;font-family:'Liberation Sans','Noto Sans CJK SC',sans-serif;font-size:12px;line-height:15px;padding-left:1px">合同</div>
<div class="a" style="left:1085px;top:271px;width:17px;height:43px;background:#f1f1f1"></div>
<svg class="a" style="left:1088px;top:275px" width="11" height="36" viewBox="0 0 11 36"><path d="M1.5 8 L5.5 3.5 L9.5 8 M1.5 28 L5.5 32.5 L9.5 28" fill="none" stroke="#b5b5b5" stroke-width="1.6"/></svg>
<div class="a" style="left:216px;top:302px;width:13px;height:13px;border:1px solid #9fb2c8;background:linear-gradient(135deg,#dfe6ee,#f8fafc)"></div>
<svg class="a" style="left:218px;top:304px" width="9" height="9" viewBox="0 0 9 9"><path d="M1 4.5 L3.5 7.5 L8 1" fill="none" stroke="#4a5f9a" stroke-width="1.6"/></svg>
<div class="lab" style="left:233px;top:300px">生成</div>
<div class="a" style="left:214px;top:322px;width:890px;height:405px;border:1px solid #101010;background:#fff"></div>
<div class="a" style="left:215px;top:323px;width:41px;height:32px;background:#a6bcdc;border:2px solid #c0d1e8;border-right:1px solid #8aa3c6;border-bottom:1px solid #8aa3c6"></div>
<svg class="a" style="left:228px;top:327px" width="25" height="25" viewBox="0 0 25 25"><path d="M24 1 V24 H1 Z" fill="#e9eff7"/></svg>
<div class="a" style="left:256px;top:323px;width:24px;height:32px;background:linear-gradient(#f9d99f,#f6bd62);border-right:1px solid #9eb6ce;border-bottom:1px solid #9eb6ce"></div>
<div class="gh" style="left:280px;width:138px"><span style="top:11px">字段名</span></div>
<div class="gh" style="left:418px;width:138px"><span style="top:11px">生成名</span></div>
<div class="gh" style="left:556px;width:32px"><span style="top:5px">生<br>成</span></div>
<div class="gh" style="left:588px;width:102px"><span style="top:11px">数据类型</span></div>
<div class="gh" style="left:690px;width:51px"><span style="top:5px">长<br>度</span></div>
<div class="gh" style="left:741px;width:61px"><span style="top:5px">默认<br>值</span></div>
<div class="gh" style="left:802px;width:51px"><span style="top:5px">可<br>空</span></div>
<div class="gh" style="left:853px;width:51px"><span style="top:5px">唯<br>一</span></div>
<div class="gh" style="left:904px;width:61px"><span style="top:5px">计算<br>列</span></div>
<div class="gh" style="left:965px;width:120px"><span style="top:11px">备注<span class="ss" style="position:static;letter-spacing:-1.2px">(</span>可修改<span class="ss" style="position:static">)</span></span></div>
<div class="gr" style="top:355px;height:23px;overflow:hidden">
<div class="rh" style="background:linear-gradient(#fcd79a,#f9b85c);border-color:#e0a040"></div>
<div class="a" style="left:8px;top:7px;width:0;height:0;border:5px solid transparent;border-left:5px solid #000;border-right:0"></div>
<div class="c" style="left:41px;width:24px;background:linear-gradient(90deg,rgba(255,255,255,0) 40%,rgba(255,255,255,.65) 100%),linear-gradient(#f9c27c 0,#fbd58e 55%,#fdebbd 100%)"></div>
<svg class="a" style="left:46px;top:2px" width="12" height="20" viewBox="0 0 12 20"><path d="M4.4 8.5 V17.6 L5.6 18.8 L7 17.6 V16.4 H8.2 V15.2 H7 V14 H8.4 V12.6 H7 V8.5Z" fill="#e0a01c" stroke="#b87a0c" stroke-width=".5"/><circle cx="5.8" cy="5.2" r="4.5" fill="#f6c544" stroke="#e0a01c" stroke-width=".8"/><path d="M2.6 3.6 A3.6 3.6 0 0 1 6.5 1.6" fill="none" stroke="#fff" stroke-opacity=".55" stroke-width="1"/><circle cx="5.6" cy="3.8" r="1.15" fill="#fff" stroke="#b87a0c" stroke-width=".4"/></svg>
<div class="c ss" style="left:65px;width:138px">Id</div>
<div class="c ss" style="left:203px;width:138px">Id</div>
<div class="c" style="left:341px;width:32px"><div class="cb on" style="left:9px"></div></div>
<div class="c ss" style="left:373px;width:102px;padding-left:2px">uniqueidentifier</div>
<div class="c ss" style="left:475px;width:51px;padding-left:2px">16</div>
<div class="c ss" style="left:526px;width:61px;padding-left:2px">(newid())</div>
<div class="c" style="left:587px;width:51px"><div class="cb" style="left:18px"></div></div>
<div class="c" style="left:638px;width:51px"><div class="cb" style="left:18px"></div></div>
<div class="c" style="left:689px;width:61px"><div class="cb" style="left:23px"></div></div>
<div class="c ss" style="left:750px;width:120px;padding-left:2px;line-height:24px"><b>标识</b></div>
</div>
<div class="gr" style="top:378px;height:23px;overflow:hidden">
<div class="rh"></div><div class="c" style="left:41px;width:24px"></div>
<svg class="a" style="left:46px;top:2px" width="12" height="20" viewBox="0 0 12 20"><path d="M4.4 8.5 V17.6 L5.6 18.8 L7 17.6 V16.4 H8.2 V15.2 H7 V14 H8.4 V12.6 H7 V8.5Z" fill="#8a8a8a" stroke="#6a6a6a" stroke-width=".5"/><circle cx="5.8" cy="5.2" r="4.5" fill="#b4b4b4" stroke="#8a8a8a" stroke-width=".8"/><path d="M2.6 3.6 A3.6 3.6 0 0 1 6.5 1.6" fill="none" stroke="#fff" stroke-opacity=".55" stroke-width="1"/><circle cx="5.6" cy="3.8" r="1.15" fill="#fff" stroke="#6a6a6a" stroke-width=".4"/></svg>
<div class="c ss" style="left:65px;width:138px">UndertakerDepartmentId</div>
<div class="c ss" style="left:203px;width:138px">UndertakerDepartmentId</div>
<div class="c" style="left:341px;width:32px"><div class="cb on" style="left:9px"></div></div>
<div class="c ss" style="left:373px;width:102px;padding-left:2px">uniqueidentifier</div>
<div class="c ss" style="left:475px;width:51px;padding-left:2px">16</div>
<div class="c ss" style="left:526px;width:61px;padding-left:2px"></div>
<div class="c" style="left:587px;width:51px"><div class="cb" style="left:18px"></div></div>
<div class="c" style="left:638px;width:51px"><div class="cb" style="left:18px"></div></div>
<div class="c" style="left:689px;width:61px"><div class="cb" style="left:23px"></div></div>
<div class="c ss" style="left:750px;width:120px;padding-left:2px;line-height:24px"><b>承办部门（是否需</b>...</div>
</div>
<div class="gr" style="top:401px;height:23px;overflow:hidden">
<div class="rh"></div><div class="c" style="left:41px;width:24px"></div>
<div class="c ss" style="left:65px;width:138px">CurrentApprovalGroupId</div>
<div class="c ss" style="left:203px;width:138px">CurrentApprovalGroupId</div>
<div class="c" style="left:341px;width:32px"><div class="cb on" style="left:9px"></div></div>
<div class="c ss" style="left:373px;width:102px;padding-left:2px">uniqueidentifier</div>
<div class="c ss" style="left:475px;width:51px;padding-left:2px">16</div>
<div class="c ss" style="left:526px;width:61px;padding-left:2px"></div>
<div class="c" style="left:587px;width:51px"><div class="cb on" style="left:18px"></div></div>
<div class="c" style="left:638px;width:51px"><div class="cb" style="left:18px"></div></div>
<div class="c" style="left:689px;width:61px"><div class="cb" style="left:23px"></div></div>
<div class="c ss" style="left:750px;width:120px;padding-left:2px;line-height:24px"><b>正在进行的流程号</b></div>
</div>
<div class="gr" style="top:424px;height:23px;overflow:hidden">
<div class="rh"></div><div class="c" style="left:41px;width:24px"></div>
<div class="c ss" style="left:65px;width:138px">No</div>
<div class="c ss" style="left:203px;width:138px">No</div>
<div class="c" style="left:341px;width:32px"><div class="cb on" style="left:9px"></div></div>
<div class="c ss" style="left:373px;width:102px;padding-left:2px">nvarchar</div>
<div class="c ss" style="left:475px;width:51px;padding-left:2px">50</div>
<div class="c ss" style="left:526px;width:61px;padding-left:2px"></div>
<div class="c" style="left:587px;width:51px"><div class="cb" style="left:18px"></div></div>
<div class="c" style="left:638px;width:51px"><div class="cb" style="left:18px"></div></div>
<div class="c" style="left:689px;width:61px"><div class="cb" style="left:23px"></div></div>
<div class="c ss" style="left:750px;width:120px;padding-left:2px;line-height:24px"><b>合同编号</b></div>
</div>
<div class="gr" style="top:447px;height:23px;overflow:hidden">
<div class="rh"></div><div class="c" style="left:41px;width:24px"></div>
<div class="c ss" style="left:65px;width:138px">Type</div>
<div class="c ss" style="left:203px;width:138px">Type</div>
<div class="c" style="left:341px;width:32px"><div class="cb on" style="left:9px"></div></div>
<div class="c ss" style="left:373px;width:102px;padding-left:2px">nvarchar</div>
<div class="c ss" style="left:475px;width:51px;padding-left:2px">50</div>
<div class="c ss" style="left:526px;width:61px;padding-left:2px"></div>
<div class="c" style="left:587px;width:51px"><div class="cb" style="left:18px"></div></div>
<div class="c" style="left:638px;width:51px"><div class="cb" style="left:18px"></div></div>
<div class="c" style="left:689px;width:61px"><div class="cb" style="left:23px"></div></div>
<div class="c ss" style="left:750px;width:120px;padding-left:2px;line-height:24px"><b>合同类别</b></div>
</div>
<div class="gr" style="top:470px;height:23px;overflow:hidden">
<div class="rh"></div><div class="c" style="left:41px;width:24px"></div>
<div class="c ss" style="left:65px;width:138px">Year</div>
<div class="c ss" style="left:203px;width:138px">Year</div>
<div class="c" style="left:341px;width:32px"><div class="cb on" style="left:9px"></div></div>
<div class="c ss" style="left:373px;width:102px;padding-left:2px">int</div>
<div class="c ss" style="left:475px;width:51px;padding-left:2px">4</div>
<div class="c ss" style="left:526px;width:61px;padding-left:2px"></div>
<div class="c" style="left:587px;width:51px"><div class="cb" style="left:18px"></div></div>
<div class="c" style="left:638px;width:51px"><div class="cb" style="left:18px"></div></div>
<div class="c" style="left:689px;width:61px"><div class="cb" style="left:23px"></div></div>
<div class="c ss" style="left:750px;width:120px;padding-left:2px;line-height:24px"><b>合同年度</b></div>
</div>
<div class="gr" style="top:493px;height:23px;overflow:hidden">
<div class="rh"></div><div class="c" style="left:41px;width:24px"></div>
<div class="c ss" style="left:65px;width:138px">ProjectName</div>
<div class="c ss" style="left:203px;width:138px">ProjectName</div>
<div class="c" style="left:341px;width:32px"><div class="cb on" style="left:9px"></div></div>
<div class="c ss" style="left:373px;width:102px;padding-left:2px">nvarchar</div>
<div class="c ss" style="left:475px;width:51px;padding-left:2px">500</div>
<div class="c ss" style="left:526px;width:61px;padding-left:2px"></div>
<div class="c" style="left:587px;width:51px"><div class="cb" style="left:18px"></div></div>
<div class="c" style="left:638px;width:51px"><div class="cb" style="left:18px"></div></div>
<div class="c" style="left:689px;width:61px"><div class="cb" style="left:23px"></div></div>
<div class="c ss" style="left:750px;width:120px;padding-left:2px;line-height:24px"><b>项目名称</b></div>
</div>
<div class="gr" style="top:516px;height:23px;overflow:hidden">
<div class="rh"></div><div class="c" style="left:41px;width:24px"></div>
<div class="c ss" style="left:65px;width:138px">Money</div>
<div class="c ss" style="left:203px;width:138px">Money</div>
<div class="c" style="left:341px;width:32px"><div class="cb on" style="left:9px"></div></div>
<div class="c ss" style="left:373px;width:102px;padding-left:2px">float</div>
<div class="c ss" style="left:475px;width:51px;padding-left:2px">8</div>
<div class="c ss" style="left:526px;width:61px;padding-left:2px"></div>
<div class="c" style="left:587px;width:51px"><div class="cb" style="left:18px"></div></div>
<div class="c" style="left:638px;width:51px"><div class="cb" style="left:18px"></div></div>
<div class="c" style="left:689px;width:61px"><div class="cb" style="left:23px"></div></div>
<div class="c ss" style="left:750px;width:120px;padding-left:2px;line-height:24px"><b>总价</b></div>
</div>
<div class="gr" style="top:539px;height:23px;overflow:hidden">
<div class="rh"></div><div class="c" style="left:41px;width:24px"></div>
<div class="c ss" style="left:65px;width:138px">Paid</div>
<div class="c ss" style="left:203px;width:138px">Paid</div>
<div class="c" style="left:341px;width:32px"><div class="cb on" style="left:9px"></div></div>
<div class="c ss" style="left:373px;width:102px;padding-left:2px">float</div>
<div class="c ss" style="left:475px;width:51px;padding-left:2px">8</div>
<div class="c ss" style="left:526px;width:61px;padding-left:2px">((0))</div>
<div class="c" style="left:587px;width:51px"><div class="cb" style="left:18px"></div></div>
<div class="c" style="left:638px;width:51px"><div class="cb" style="left:18px"></div></div>
<div class="c" style="left:689px;width:61px"><div class="cb" style="left:23px"></div></div>
<div class="c ss" style="left:750px;width:120px;padding-left:2px;line-height:24px"><b>已支付金额</b></div>
</div>
<div class="gr" style="top:562px;height:23px;overflow:hidden">
<div class="rh"></div><div class="c" style="left:41px;width:24px"></div>
<div class="c ss" style="left:65px;width:138px">NotPay</div>
<div class="c ss" style="left:203px;width:138px">NotPay</div>
<div class="c" style="left:341px;width:32px"><div class="cb on" style="left:9px"></div></div>
<div class="c ss" style="left:373px;width:102px;padding-left:2px">float</div>
<div class="c ss" style="left:475px;width:51px;padding-left:2px">8</div>
<div class="c ss" style="left:526px;width:61px;padding-left:2px">((0))</div>
<div class="c" style="left:587px;width:51px"><div class="cb" style="left:18px"></div></div>
<div class="c" style="left:638px;width:51px"><div class="cb" style="left:18px"></div></div>
<div class="c" style="left:689px;width:61px"><div class="cb" style="left:23px"></div></div>
<div class="c ss" style="left:750px;width:120px;padding-left:2px;line-height:24px"><b>已支付金额</b></div>
</div>
<div class="gr" style="top:585px;height:23px;overflow:hidden">
<div class="rh"></div><div class="c" style="left:41px;width:24px"></div>
<div class="c ss" style="left:65px;width:138px">BillOfExchangeAmount</div>
<div class="c ss" style="left:203px;width:138px">BillOfExchangeAmount</div>
<div class="c" style="left:341px;width:32px"><div class="cb on" style="left:9px"></div></div>
<div class="c ss" style="left:373px;width:102px;padding-left:2px">float</div>
<div class="c ss" style="left:475px;width:51px;padding-left:2px">8</div>
<div class="c ss" style="left:526px;width:61px;padding-left:2px">((0))</div>
<div class="c" style="left:587px;width:51px"><div class="cb" style="left:18px"></div></div>
<div class="c" style="left:638px;width:51px"><div class="cb" style="left:18px"></div></div>
<div class="c" style="left:689px;width:61px"><div class="cb" style="left:23px"></div></div>
<div class="c ss" style="left:750px;width:120px;padding-left:2px;line-height:24px"><b>汇票总额</b></div>
</div>
<div class="gr" style="top:608px;height:23px;overflow:hidden">
<div class="rh"></div><div class="c" style="left:41px;width:24px"></div>
<div class="c ss" style="left:65px;width:138px">BillOfExchangeIsPay</div>
<div class="c ss" style="left:203px;width:138px">BillOfExchangeIsPay</div>
<div class="c" style="left:341px;width:32px"><div class="cb on" style="left:9px"></div></div>
<div class="c ss" style="left:373px;width:102px;padding-left:2px">float</div>
<div class="c ss" style="left:475px;width:51px;padding-left:2px">8</div>
<div class="c ss" style="left:526px;width:61px;padding-left:2px">((0))</div>
<div class="c" style="left:587px;width:51px"><div class="cb" style="left:18px"></div></div>
<div class="c" style="left:638px;width:51px"><div class="cb" style="left:18px"></div></div>
<div class="c" style="left:689px;width:61px"><div class="cb" style="left:23px"></div></div>
<div class="c ss" style="left:750px;width:120px;padding-left:2px;line-height:24px"><b>已兑现汇票</b></div>
</div>
<div class="gr" style="top:631px;height:23px;overflow:hidden">
<div class="rh"></div><div class="c" style="left:41px;width:24px"></div>
<div class="c ss" style="left:65px;width:138px">BillOfExchangeIsNotPay</div>
<div class="c ss" style="left:203px;width:138px">BillOfExchangeIsNotPay</div>
<div class="c" style="left:341px;width:32px"><div class="cb on" style="left:9px"></div></div>
<div class="c ss" style="left:373px;width:102px;padding-left:2px">float</div>
<div class="c ss" style="left:475px;width:51px;padding-left:2px">8</div>
<div class="c ss" style="left:526px;width:61px;padding-left:2px">((0))</div>
<div class="c" style="left:587px;width:51px"><div class="cb" style="left:18px"></div></div>
<div class="c" style="left:638px;width:51px"><div class="cb" style="left:18px"></div></div>
<div class="c" style="left:689px;width:61px"><div class="cb" style="left:23px"></div></div>
<div class="c ss" style="left:750px;width:120px;padding-left:2px;line-height:24px"><b>未兑现汇票</b></div>
</div>
<div class="gr" style="top:654px;height:23px;overflow:hidden">
<div class="rh"></div><div class="c" style="left:41px;width:24px"></div>
<div class="c ss" style="left:65px;width:138px">BillOfParcelAmount</div>
<div class="c ss" style="left:203px;width:138px">BillOfParcelAmount</div>
<div class="c" style="left:341px;width:32px"><div class="cb on" style="left:9px"></div></div>
<div class="c ss" style="left:373px;width:102px;padding-left:2px">float</div>
<div class="c ss" style="left:475px;width:51px;padding-left:2px">8</div>
<div class="c ss" style="left:526px;width:61px;padding-left:2px">((0))</div>
<div class="c" style="left:587px;width:51px"><div class="cb" style="left:18px"></div></div>
<div class="c" style="left:638px;width:51px"><div class="cb" style="left:18px"></div></div>
<div class="c" style="left:689px;width:61px"><div class="cb" style="left:23px"></div></div>
<div class="c ss" style="left:750px;width:120px;padding-left:2px;line-height:24px"><b>支票总额</b></div>
</div>
<div class="gr" style="top:677px;height:23px;overflow:hidden">
<div class="rh"></div><div class="c" style="left:41px;width:24px"></div>
<div class="c ss" style="left:65px;width:138px">CreateTime</div>
<div class="c ss" style="left:203px;width:138px">CreateTime</div>
<div class="c" style="left:341px;width:32px"><div class="cb on" style="left:9px"></div></div>
<div class="c ss" style="left:373px;width:102px;padding-left:2px">datetime</div>
<div class="c ss" style="left:475px;width:51px;padding-left:2px">8</div>
<div class="c ss" style="left:526px;width:61px;padding-left:2px">(getda...</div>
<div class="c" style="left:587px;width:51px"><div class="cb" style="left:18px"></div></div>
<div class="c" style="left:638px;width:51px"><div class="cb" style="left:18px"></div></div>
<div class="c" style="left:689px;width:61px"><div class="cb" style="left:23px"></div></div>
<div class="c ss" style="left:750px;width:120px;padding-left:2px;line-height:24px"><b>添加时间</b></div>
</div>
<div class="gr" style="top:700px;height:23px;overflow:hidden">
<div class="rh"></div><div class="c" style="left:41px;width:24px"></div>
<div class="c ss" style="left:65px;width:138px">FirstPartyName</div>
<div class="c ss" style="left:203px;width:138px">FirstPartyName</div>
<div class="c" style="left:341px;width:32px"><div class="cb on" style="left:9px"></div></div>
<div class="c ss" style="left:373px;width:102px;padding-left:2px">nvarchar</div>
<div class="c ss" style="left:475px;width:51px;padding-left:2px">50</div>
<div class="c ss" style="left:526px;width:61px;padding-left:2px"></div>
<div class="c" style="left:587px;width:51px"><div class="cb" style="left:18px"></div></div>
<div class="c" style="left:638px;width:51px"><div class="cb" style="left:18px"></div></div>
<div class="c" style="left:689px;width:61px"><div class="cb" style="left:23px"></div></div>
<div class="c ss" style="left:750px;width:120px;padding-left:2px;line-height:24px"><b>甲方名称</b></div>
</div>
<div class="gr" style="top:723px;height:3px;overflow:hidden">
<div class="rh"></div><div class="c" style="left:41px;width:24px"></div>
<div class="c ss" style="left:65px;width:138px"></div>
<div class="c ss" style="left:203px;width:138px"></div>
<div class="c" style="left:341px;width:32px"></div>
<div class="c ss" style="left:373px;width:102px;padding-left:2px"></div>
<div class="c ss" style="left:475px;width:51px;padding-left:2px"></div>
<div class="c ss" style="left:526px;width:61px;padding-left:2px"></div>
<div class="c" style="left:587px;width:51px"></div>
<div class="c" style="left:638px;width:51px"></div>
<div class="c" style="left:689px;width:61px"></div>
<div class="c ss" style="left:750px;width:120px;padding-left:2px;line-height:24px"></div>
</div>
<div class="a" style="left:1085px;top:323px;width:18px;height:403px;background:linear-gradient(90deg,#9db3d3,#c6d5ea 40%,#d3dff0);border-left:1px solid #8aa3c6"></div>
<div class="a" style="left:1085px;top:323px;width:18px;height:17px;background:linear-gradient(90deg,#c8d7ec,#dfe8f5);border:1px solid #8aa3c6"></div>
<div class="a" style="left:1089px;top:328px;width:0;height:0;border:5px solid transparent;border-bottom:5px solid #3a4a66;border-top:0"></div>
<div class="a" style="left:1085px;top:340px;width:18px;height:108px;background:linear-gradient(90deg,#8ea9cf,#b9cce6 50%,#a9bfde);border:1px solid #7f99bd;border-radius:2px"></div>
<div class="a" style="left:1089px;top:390px;width:9px;height:7px;background-image:linear-gradient(#7088b0 1px,transparent 1px);background-size:9px 2px"></div>
<div class="a" style="left:1085px;top:709px;width:18px;height:17px;background:linear-gradient(90deg,#c8d7ec,#dfe8f5);border:1px solid #8aa3c6"></div>
<div class="a" style="left:1089px;top:715px;width:0;height:0;border:5px solid transparent;border-top:5px solid #3a4a66;border-bottom:0"></div>
<div class="a" style="left:8px;top:735px;width:1106px;height:19px;background:linear-gradient(#dfe9f6 0,#d0deef 45%,#c2d3ea 60%,#bed0e8 100%)"></div>
<div class="a" style="left:9px;top:737px;line-height:16px;font-size:12px;color:#2b3f66;white-space:nowrap;font-family:'DejaVu Sans','Noto Sans CJK SC',sans-serif;letter-spacing:-.3px">Copyright © 2008 - 2009 <span style="font-weight:bold;color:#15325f;font-family:'Liberation Sans','Noto Sans CJK SC',sans-serif;letter-spacing:0">比特培训中心</span></div>
<svg class="a" style="left:1102px;top:742px" width="11" height="11" viewBox="0 0 11 11"><path d="M8 0h2v2h-2zM4 4h2v2h-2zM8 4h2v2h-2zM0 8h2v2h-2zM4 8h2v2h-2zM8 8h2v2h-2z" fill="#7088a8"/></svg>
<svg class="a" style="left:870px;top:678px" width="245" height="68" viewBox="0 0 245 68">
<defs><clipPath id="bclip"><path d="M4 5 H34 Q47.5 5 47.5 19 Q47.5 26 45.8 28.5 Q48.8 32 48.8 45 Q48.8 62.3 32 62.3 H4 Z"/></clipPath></defs>
<g fill="#5a7ea8" opacity=".62">
<path d="M4 5 H34 Q47.5 5 47.5 19 Q47.5 26 45.8 28.5 Q48.8 32 48.8 45 Q48.8 62.3 32 62.3 H4 Z"/>
<rect x="52" y="26" width="20.5" height="36.3"/>
<rect x="87" y="27" width="20" height="35.3"/>
<path d="M75 6h44v2.6h-44zM75 10.8h44v2.6h-44zM75 15.6h44v2.6h-44zM75 20.4h44v2.6h-44zM75 25h44v2.2h-44z"/>
</g>
<rect x="52" y="5" width="20.5" height="17.5" fill="#a9c06a" opacity=".7"/>
<g clip-path="url(#bclip)" stroke="#fff" stroke-opacity=".8" stroke-width="1.9">
<path d="M4 6 L28 24 M4 10.8 L28 28.8 M4 15.6 L28 33.6 M4 20.4 L28 38.4 M4 25.2 L28 43.2 M4 30 L28 48 M4 1.2 L28 19.2 M10.4 1.2 L28 14.4 M16.8 1.2 L28 9.6"/>
</g>
<text x="130" y="44" font-family="Liberation Sans,Noto Sans CJK SC,sans-serif" font-weight="900" font-size="24" letter-spacing="4.8" fill="#5a7ea8" fill-opacity=".62">比特软件</text>
<text x="130" y="61.5" font-family="Liberation Sans,sans-serif" font-size="10" fill="#5a7ea8" fill-opacity=".7" textLength="108" lengthAdjust="spacingAndGlyphs">BIT SOFTWARE</text>
</svg>
</body></html>
